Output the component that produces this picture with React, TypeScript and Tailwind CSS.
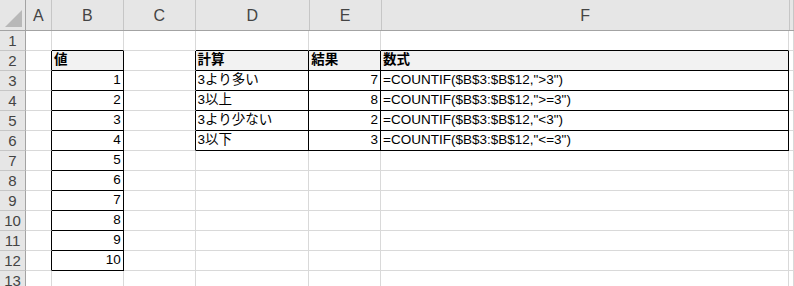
import React from 'react';

type Cell = { text: string; align?: 'left' | 'right'; head?: boolean };

const cols = ['A', 'B', 'C', 'D', 'E', 'F', 'G'];
const colWidths = ['w-[26px]', 'w-[72px]', 'w-[72px]', 'w-[114px]', 'w-[72px]', 'w-[409px]', 'w-[4px]'];

// sheet contents keyed by "col,row"
const sheet: Record<string, Cell> = {};
sheet['1,2'] = { text: '値', head: true };
for (let i = 1; i <= 10; i++) sheet[`1,${i + 2}`] = { text: String(i), align: 'right' };

sheet['3,2'] = { text: '計算', head: true };
sheet['4,2'] = { text: '結果', head: true };
sheet['5,2'] = { text: '数式', head: true };

const rules = [
  ['3より多い', '7', '">3"'],
  ['3以上', '8', '">=3"'],
  ['3より少ない', '2', '"<3"'],
  ['3以下', '3', '"<=3"'],
];
rules.forEach(([label, result, cond], i) => {
  const r = i + 3;
  sheet[`3,${r}`] = { text: label };
  sheet[`4,${r}`] = { text: result, align: 'right' };
  sheet[`5,${r}`] = { text: `=COUNTIF($B$3:$B$12,${cond})` };
});

const inTable = (c: number, r: number) => !!sheet[`${c},${r}`];

const rows = Array.from({ length: 13 }, (_, i) => i + 1);

const App: React.FC = () => {
  return (
    <div className="w-[794px] h-[286px] overflow-hidden bg-white font-['Liberation_Sans','Noto_Sans_CJK_JP',sans-serif]">
      {/* column headers */}
      <div className="flex h-[31px] bg-[#e6e6e6] border-b border-b-[#a3a3a3]">
        <div className="w-[26px] h-full border-r border-r-[#a3a3a3] flex items-end justify-end p-[3px]">
          <div className="w-0 h-0 border-l-[17px] border-l-transparent border-b-[17px] border-b-[#b8b8b8]" />
        </div>
        {cols.map((c, i) => (
          <div
            key={c}
            className={`${colWidths[i]} h-full border-r border-r-[#c6c6c6] flex items-center justify-center text-[16px] text-[#444] pt-[1px]`}
          >
            {c === 'G' ? '' : c}
          </div>
        ))}
      </div>

      {rows.map((r) => (
        <div key={r} className="flex h-[20px]">
          <div className="w-[26px] h-full bg-[#e6e6e6] border-r border-r-[#a3a3a3] border-b border-b-[#c6c6c6] flex items-center justify-center text-[15px] leading-none text-[#444] pb-[1px]">
            {r}
          </div>
          {cols.map((_, c) => {
            const cell = sheet[`${c},${r}`];
            const right = inTable(c, r) || inTable(c + 1, r) ? 'border-r-black' : 'border-r-[#d9d9d9]';
            const bottom = inTable(c, r) || inTable(c, r + 1) ? 'border-b-black' : 'border-b-[#d9d9d9]';
            const bg = cell?.head ? 'bg-[#f2f2f2] font-bold' : '';
            const align = cell?.align === 'right' ? 'justify-end' : 'justify-start';
            return (
              <div
                key={c}
                className={`${colWidths[c]} h-full border-r border-b ${right} ${bottom} ${bg} ${align} flex items-center px-[2px] text-[13.5px] text-black whitespace-nowrap overflow-hidden`}
              >
                {cell?.text}
              </div>
            );
          })}
        </div>
      ))}
    </div>
  );
};

export default App;
